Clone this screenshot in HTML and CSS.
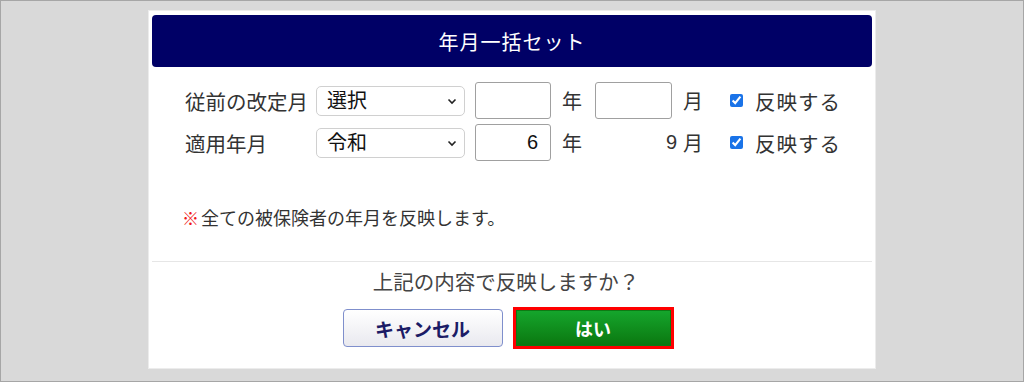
FILE: index.html
```html
<!DOCTYPE html>
<html lang="ja">
<head>
<meta charset="utf-8">
<title>年月一括セット</title>
<link rel="stylesheet" href="styles.css">
</head>
<body>
<div class="dialog">
  <div class="dlg-header">年月一括セット</div>
  <div class="form-grid">
    <span class="label">従前の改定月</span>
    <div class="select-wrap">
      <select class="sel"><option>選択</option></select>
      <svg class="chev" width="10" height="7" viewBox="0 0 10 7"><path d="M1.5 1.5 L5 5 L8.5 1.5" fill="none" stroke="#222" stroke-width="1.6"/></svg>
    </div>
    <input class="num" type="text" value="">
    <span class="unit">年</span>
    <input class="num num2" type="text" value="">
    <span class="unit">月</span>
    <input class="chk" type="checkbox" checked>
    <span class="chk-label">反映する</span>

    <span class="label">適用年月</span>
    <div class="select-wrap">
      <select class="sel"><option>令和</option></select>
      <svg class="chev" width="10" height="7" viewBox="0 0 10 7"><path d="M1.5 1.5 L5 5 L8.5 1.5" fill="none" stroke="#222" stroke-width="1.6"/></svg>
    </div>
    <input class="num" type="text" value="6">
    <span class="unit">年</span>
    <span class="fixed-month">9</span>
    <span class="unit">月</span>
    <input class="chk" type="checkbox" checked>
    <span class="chk-label">反映する</span>
  </div>
  <p class="note"><span class="mark">※</span>全ての被保険者の年月を反映します。</p>
  <hr class="divider">
  <p class="question">上記の内容で反映しますか？</p>
  <div class="buttons">
    <button class="btn-cancel" type="button">キャンセル</button>
    <div class="btn-ok-frame"><button class="btn-ok" type="button">はい</button></div>
  </div>
</div>
</body>
</html>
```
FILE: styles.css
```css
html, body {
  margin: 0;
  padding: 0;
}
body {
  box-sizing: border-box;
  width: 1024px;
  height: 382px;
  border: 1px solid #a6a6a6;
  background: #d9d9d9;
  font-family: "Liberation Sans", "Noto Sans CJK JP", sans-serif;
  color: #333;
  overflow: hidden;
}
.dialog {
  box-sizing: border-box;
  width: 728px;
  height: 359px;
  margin: 9px 0 0 147px;
  background: #fff;
  border: 1px solid #ececec;
  padding: 4px 3px 19px 3px;
  display: flex;
  flex-direction: column;
}
.dlg-header {
  height: 53px;
  background: #000066;
  border-radius: 4px;
  color: #fff;
  font-size: 20px;
  letter-spacing: 1px;
  display: flex;
  align-items: center;
  justify-content: center;
}
.form-grid {
  margin: 15px 0 0 33px;
  display: grid;
  grid-template-columns: 131px 159px 87px 33px 88px 47px 25px auto;
  grid-auto-rows: 37px;
  row-gap: 5px;
  align-items: center;
}
.label {
  font-size: 20.5px;
  color: #333;
  white-space: nowrap;
}
.select-wrap {
  position: relative;
  width: 149px;
  height: 30px;
}
.sel {
  appearance: none;
  -webkit-appearance: none;
  box-sizing: border-box;
  width: 149px;
  height: 30px;
  border: 1px solid #d0d0d0;
  border-radius: 5px;
  background: #fff;
  font-family: "Liberation Sans", "Noto Sans CJK JP", sans-serif;
  font-size: 20px;
  color: #111;
  padding: 0 0 0 10px;
  line-height: 28px;
}
.chev {
  position: absolute;
  right: 8px;
  top: 12px;
  pointer-events: none;
}
.num {
  box-sizing: border-box;
  width: 76px;
  height: 37px;
  border: 1px solid #a0a0a0;
  border-radius: 3px;
  font-family: "Liberation Sans", "Noto Sans CJK JP", sans-serif;
  font-size: 20px;
  color: #111;
  text-align: right;
  padding: 0 12px 0 4px;
  margin: 0;
}
.num2 {
  width: 77px;
}
.unit {
  font-size: 20px;
  color: #333;
}
.fixed-month {
  justify-self: end;
  padding-right: 6px;
  font-size: 20px;
  color: #333;
}
.chk {
  width: 13px;
  height: 13px;
  margin: 0;
  accent-color: #1a73e8;
}
.chk-label {
  font-size: 20.5px;
  letter-spacing: 1px;
  color: #333;
  white-space: nowrap;
}
.note {
  margin: 46px 0 0 30px;
  font-size: 18px;
  line-height: 24px;
  color: #333;
}
.mark {
  color: #f01818;
  font-weight: bold;
  font-size: 17px;
  margin-right: 2px;
}
.divider {
  margin: 29px 0 0 0;
  border: 0;
  border-top: 1px solid #e6e6e6;
  height: 0;
}
.question {
  margin: 7px 0 0 0;
  font-size: 20.5px;
  line-height: 28px;
  text-align: center;
  color: #444;
  padding-right: 12px;
}
.buttons {
  margin-top: 10px;
  display: flex;
  justify-content: center;
  align-items: center;
  gap: 10px;
  padding-right: 8px;
}
.btn-cancel {
  box-sizing: border-box;
  width: 160px;
  height: 38px;
  border: 1px solid #7f8fcc;
  border-radius: 4px;
  background: linear-gradient(#ffffff, #e9e9ef);
  color: #1b1b66;
  font-family: "Liberation Sans", "Noto Sans CJK JP", sans-serif;
  font-weight: bold;
  font-size: 19px;
  padding: 0;
}
.btn-ok-frame {
  box-sizing: border-box;
  width: 161px;
  height: 42px;
  border: 3px solid #ff0000;
  display: flex;
}
.btn-ok {
  flex: 1;
  border: 1px solid #0d7a14;
  background: linear-gradient(#15a52c, #0b7810);
  color: #fff;
  font-family: "Liberation Sans", "Noto Sans CJK JP", sans-serif;
  font-weight: bold;
  font-size: 18px;
  padding: 0;
}
```
